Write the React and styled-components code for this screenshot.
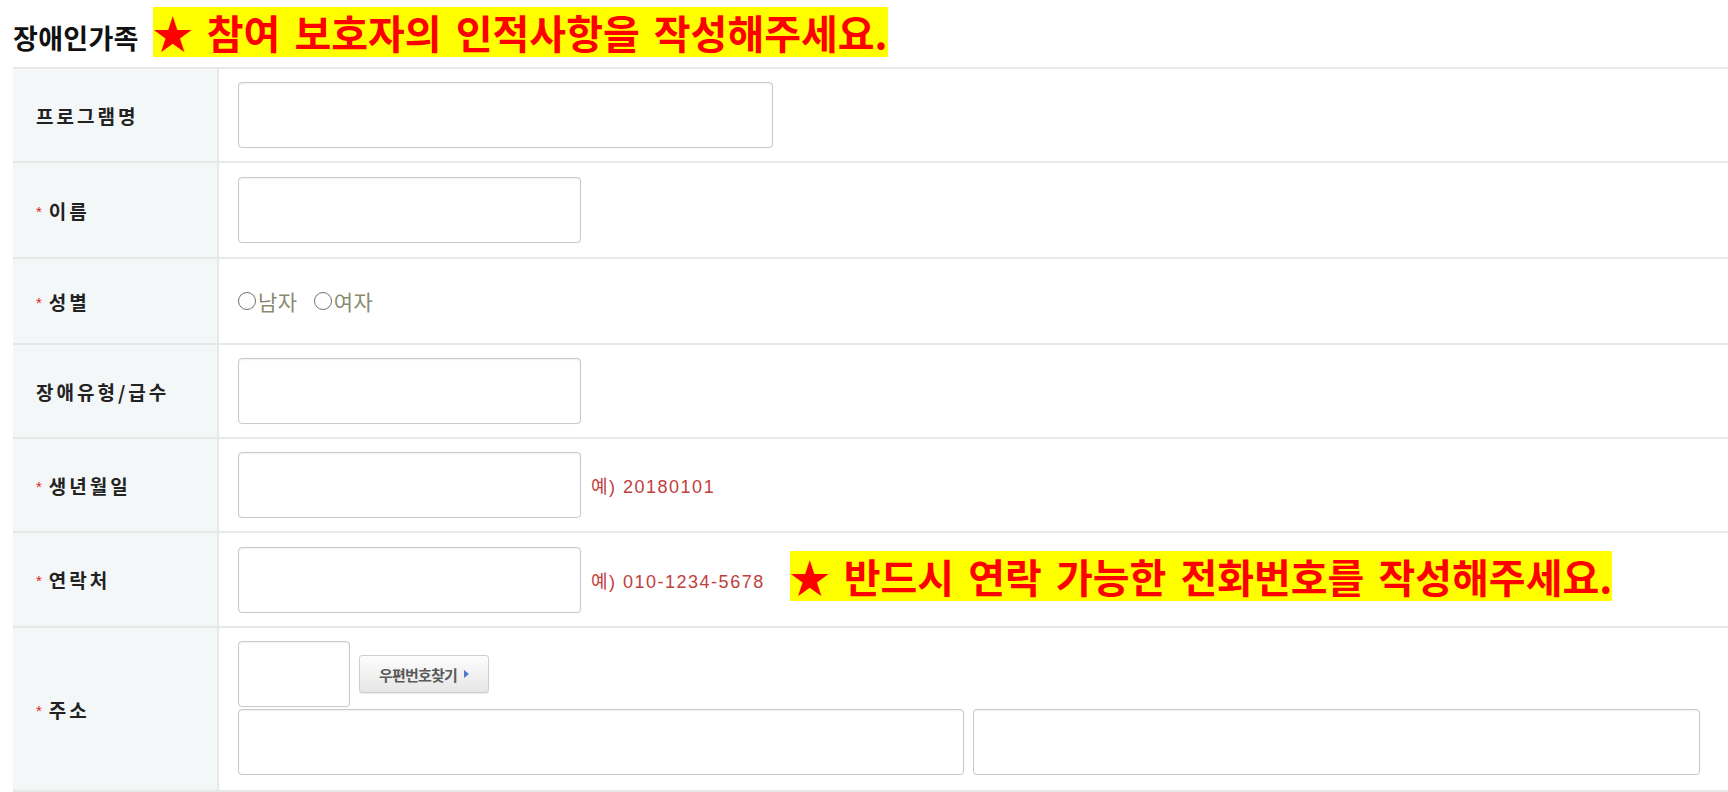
import React from "react";
import styled, { createGlobalStyle } from "styled-components";

const GlobalStyle = createGlobalStyle`
  body {
    margin: 0;
    background: #fff;
    font-family: "Noto Sans CJK KR", "Noto Sans", sans-serif;
    color: #222;
  }
`;

const Page = styled.div`
  padding: 7px 0 0 13px;
`;

const Heading = styled.h2`
  margin: 0 0 10px;
  height: 50px;
  line-height: 50px;
  font-weight: normal;
  white-space: nowrap;
`;

const Title = styled.span`
  font-size: 27px;
  font-weight: 700;
  color: #111;
  letter-spacing: 0.3px;
`;

const Highlight = styled.span`
  display: inline-block;
  background: #ffff00;
  color: #ff0000;
  font-size: 40px;
  font-weight: 700;
  line-height: 50px;
  word-spacing: 5px;
  margin-left: ${(p) => p.$offset || 0}px;
  margin-bottom: ${(p) => (p.$lift ? 7 : 0)}px;
  white-space: nowrap;
`;

const Form = styled.div`
  border-top: 2px solid #e8e8e8;
`;

const Row = styled.div`
  display: grid;
  grid-template-columns: 206px 1fr;
  border-bottom: 2px solid #e8e8e8;
`;

const Label = styled.div`
  box-sizing: border-box;
  background: #f4f7f8;
  border-right: 2px solid #e8e8e8;
  padding-left: 23px;
  display: flex;
  align-items: center;
  font-size: 19px;
  font-weight: 700;
  letter-spacing: 3px;
  color: #222;
`;

const Req = styled.span`
  color: #e02020;
  font-family: "Liberation Sans", sans-serif;
  font-size: 15px;
  font-weight: 400;
  margin-right: 7px;
  letter-spacing: 0;
  position: relative;
  top: 1px;
`;

const Cell = styled.div`
  box-sizing: border-box;
  min-height: ${(p) => p.$minH || 92}px;
  padding: 13px 0 ${(p) => (p.$column ? 15 : 13)}px 19px;
  display: flex;
  flex-direction: ${(p) => (p.$column ? "column" : "row")};
  align-items: ${(p) => (p.$column ? "flex-start" : "center")};
  gap: ${(p) => (p.$column ? "2px" : "0")};
`;

const Input = styled.input`
  box-sizing: border-box;
  width: ${(p) => p.$w || 343}px;
  height: 66px;
  border: 1px solid #c9c9cc;
  border-radius: 4px;
  box-shadow: inset 0 1px 2px rgba(0, 0, 0, 0.06), 0 0 1px rgba(0, 0, 0, 0.08);
  background: #fff;
  font-size: 16px;
  padding: 0 10px;
  margin: 0;
  outline: none;
`;

const Hint = styled.span`
  margin-left: 10px;
  font-family: "Liberation Sans", "Noto Sans CJK KR", sans-serif;
  font-size: 18px;
  letter-spacing: 1.5px;
  color: #c0403c;
  white-space: nowrap;
`;

const RadioGroup = styled.div`
  display: flex;
  align-items: center;
  gap: 16px;
`;

const RadioLabel = styled.label`
  display: flex;
  align-items: center;
  gap: 2px;
  font-size: 21px;
  letter-spacing: 0.5px;
  color: #8a8a72;
`;

const Radio = styled.input`
  appearance: none;
  width: 18px;
  height: 18px;
  margin: 0;
  border: 1.5px solid #707070;
  border-radius: 50%;
  background: #fff;
`;

const ZipLine = styled.div`
  display: flex;
  align-items: center;
  gap: 9px;
`;

const ZipButton = styled.button`
  box-sizing: border-box;
  width: 130px;
  height: 38px;
  display: flex;
  align-items: center;
  justify-content: center;
  gap: 7px;
  border: 1px solid #cfcfcf;
  border-radius: 3px;
  background: linear-gradient(#fdfdfd, #e6e6e6);
  box-shadow: 0 1px 1px rgba(0, 0, 0, 0.08);
  font-family: inherit;
  font-size: 15px;
  font-weight: 700;
  color: #5a5a5a;
  letter-spacing: -0.8px;
  padding: 0;
`;

const Arrow = styled.span`
  width: 0;
  height: 0;
  border-top: 4px solid transparent;
  border-bottom: 4px solid transparent;
  border-left: 5px solid #4f78c4;
`;

const AddrLine = styled.div`
  display: flex;
  gap: 9px;
`;

export default function App() {
  return (
    <>
      <GlobalStyle />
      <Page>
        <Heading>
          <Title>장애인가족</Title>
          <Highlight $offset={14}>★ 참여 보호자의 인적사항을 작성해주세요.</Highlight>
        </Heading>
        <Form>
          <Row>
            <Label>프로그램명</Label>
            <Cell $minH={91}>
              <Input $w={535} />
            </Cell>
          </Row>
          <Row>
            <Label>
              <Req>*</Req>이름
            </Label>
            <Cell $minH={94}>
              <Input />
            </Cell>
          </Row>
          <Row>
            <Label>
              <Req>*</Req>성별
            </Label>
            <Cell $minH={84}>
              <RadioGroup>
                <RadioLabel>
                  <Radio type="radio" name="sex" />
                  남자
                </RadioLabel>
                <RadioLabel>
                  <Radio type="radio" name="sex" />
                  여자
                </RadioLabel>
              </RadioGroup>
            </Cell>
          </Row>
          <Row>
            <Label>장애유형/급수</Label>
            <Cell>
              <Input />
            </Cell>
          </Row>
          <Row>
            <Label>
              <Req>*</Req>생년월일
            </Label>
            <Cell>
              <Input />
              <Hint>예) 20180101</Hint>
            </Cell>
          </Row>
          <Row>
            <Label>
              <Req>*</Req>연락처
            </Label>
            <Cell $minH={93}>
              <Input />
              <Hint>예) 010-1234-5678</Hint>
              <Highlight $offset={25} $lift>
                ★ 반드시 연락 가능한 전화번호를 작성해주세요.
              </Highlight>
            </Cell>
          </Row>
          <Row>
            <Label>
              <Req>*</Req>주소
            </Label>
            <Cell $column>
              <ZipLine>
                <Input $w={112} />
                <ZipButton type="button">
                  우편번호찾기
                  <Arrow />
                </ZipButton>
              </ZipLine>
              <AddrLine>
                <Input $w={726} />
                <Input $w={727} />
              </AddrLine>
            </Cell>
          </Row>
        </Form>
      </Page>
    </>
  );
}
